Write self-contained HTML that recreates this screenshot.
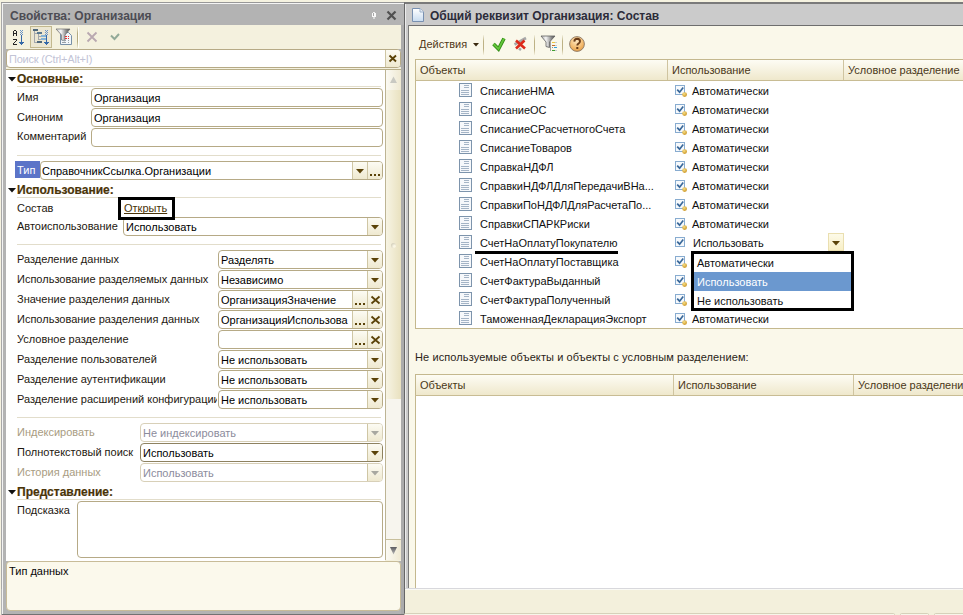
<!DOCTYPE html><html><head><meta charset="utf-8"><style>body{margin:0;width:963px;height:615px;overflow:hidden;position:relative;background:#f5f2e0;font-family:"Liberation Sans",sans-serif}</style></head><body>
<div style="position:absolute;left:1px;top:2px;width:403px;height:613px;background:#b3b3b3;border-top:1px solid #989898;box-sizing:border-box"></div>
<div style="position:absolute;left:1px;top:3px;width:1px;height:586px;background:#a8a8a8"></div>
<div style="position:absolute;left:2px;top:3px;width:402px;height:1px;background:#f4f4f4"></div>
<div style="position:absolute;left:2px;top:3px;width:1px;height:612px;background:#f2f2f2"></div>
<div style="position:absolute;left:2px;top:614px;width:402px;height:1px;background:#727272"></div>
<div style="position:absolute;left:10px;top:9.34px;line-height:15px;font-size:12px;font-weight:bold;color:#4c4c54;white-space:nowrap;">Свойства: Организация</div>
<svg style="position:absolute;left:372px;top:12px" width="4" height="7" shape-rendering="crispEdges"><rect x="0" y="1" width="4" height="4" fill="#fafafa"/><rect x="1" y="0" width="2" height="1" fill="#f0f0f0"/><rect x="1" y="1" width="1" height="3" fill="#a8a8a8"/><rect x="1" y="5" width="2" height="2" fill="#d8d8d8"/></svg>
<svg style="position:absolute;left:386px;top:10px" width="11" height="11"><path d="M1.5 1.5 L9.5 9.5 M9.5 1.5 L1.5 9.5" stroke="#505050" stroke-width="2.2"/></svg>
<div style="position:absolute;left:401px;top:25px;width:3px;height:589px;background:#ababab"></div>
<div style="position:absolute;left:6px;top:25px;width:395px;height:24px;background:#f4f1de"></div>
<div style="position:absolute;left:30px;top:26px;width:22px;height:22px;background:#ece7d2;border:1px solid #c2b88e;box-sizing:border-box"></div>
<svg style="position:absolute;left:0;top:0" width="80" height="50" shape-rendering="crispEdges"><rect x="14" y="30" width="2" height="1" fill="#262626"/><rect x="13" y="31" width="1" height="5" fill="#262626"/><rect x="16" y="31" width="1" height="5" fill="#262626"/><rect x="14" y="33" width="2" height="1" fill="#262626"/><rect x="13" y="39" width="4" height="1" fill="#262626"/><rect x="16" y="40" width="1" height="1" fill="#262626"/><rect x="15" y="41" width="1" height="1" fill="#262626"/><rect x="14" y="42" width="1" height="1" fill="#262626"/><rect x="13" y="43" width="1" height="1" fill="#262626"/><rect x="13" y="44" width="4" height="1" fill="#262626"/><rect x="20" y="30" width="1" height="1" fill="#6a94c8"/><rect x="22" y="30" width="1" height="1" fill="#6a94c8"/><rect x="21" y="31" width="1" height="1" fill="#6a94c8"/><rect x="20" y="32" width="1" height="1" fill="#6a94c8"/><rect x="22" y="32" width="1" height="1" fill="#6a94c8"/><rect x="21" y="33" width="1" height="1" fill="#6a94c8"/><rect x="20" y="34" width="1" height="1" fill="#6a94c8"/><rect x="22" y="34" width="1" height="1" fill="#6a94c8"/><rect x="21" y="35" width="1" height="7" fill="#3468a8"/><rect x="19" y="42" width="5" height="1" fill="#3468a8"/><rect x="20" y="43" width="3" height="1" fill="#3468a8"/><rect x="21" y="44" width="1" height="1" fill="#3468a8"/><rect x="33" y="29" width="5" height="2" fill="#4e687c"/><rect x="34" y="31" width="1" height="12" fill="#a4a8ac"/><rect x="35" y="33" width="2" height="1" fill="#a4a8ac"/><rect x="37" y="32" width="5" height="2" fill="#587890"/><rect x="38" y="34" width="1" height="6" fill="#a4a8ac"/><rect x="39" y="36" width="2" height="1" fill="#a4a8ac"/><rect x="39" y="39" width="2" height="1" fill="#a4a8ac"/><rect x="41" y="35" width="5" height="2" fill="#86b4d6"/><rect x="41" y="38" width="5" height="2" fill="#86b4d6"/><rect x="35" y="42" width="2" height="1" fill="#a4a8ac"/><rect x="37" y="41" width="5" height="2" fill="#4e687c"/><rect x="45" y="30" width="1" height="1" fill="#6a94c8"/><rect x="47" y="30" width="1" height="1" fill="#6a94c8"/><rect x="46" y="31" width="1" height="1" fill="#6a94c8"/><rect x="45" y="32" width="1" height="1" fill="#6a94c8"/><rect x="47" y="32" width="1" height="1" fill="#6a94c8"/><rect x="46" y="33" width="1" height="1" fill="#6a94c8"/><rect x="45" y="34" width="1" height="1" fill="#6a94c8"/><rect x="47" y="34" width="1" height="1" fill="#6a94c8"/><rect x="46" y="35" width="1" height="7" fill="#3468a8"/><rect x="44" y="42" width="5" height="1" fill="#3468a8"/><rect x="45" y="43" width="3" height="1" fill="#3468a8"/><rect x="46" y="44" width="1" height="1" fill="#3468a8"/><path d="M60.5 32.5 H68.5 L71.5 35.5 V44.5 H60.5 Z" fill="#f2f6fa" stroke="#7890a8" shape-rendering="auto"/><defs><linearGradient id="fg" x1="0" x2="1"><stop offset="0" stop-color="#c8c8c8"/><stop offset="0.35" stop-color="#f8f8f8"/><stop offset="0.7" stop-color="#909090"/><stop offset="1" stop-color="#505050"/></linearGradient></defs><path d="M56 29 H70 L65 35 V41 L61.5 40 V35 Z" fill="url(#fg)" stroke="#6a6a6a" stroke-width="0.7" shape-rendering="auto"/><rect x="65" y="36" width="2" height="1" fill="#e83030"/><rect x="68" y="36" width="1" height="1" fill="#e83030"/><rect x="65" y="38" width="2" height="1" fill="#e83030"/><rect x="68" y="38" width="1" height="1" fill="#e83030"/><rect x="62" y="40" width="4" height="1" fill="#98a0a8"/><rect x="68" y="40" width="1" height="1" fill="#98a0a8"/><rect x="62" y="42" width="4" height="1" fill="#98a0a8"/><rect x="68" y="42" width="1" height="1" fill="#98a0a8"/></svg>
<div style="position:absolute;left:77px;top:27px;width:1px;height:21px;background:linear-gradient(rgba(180,170,120,0.1),#b4aa80 30%,#b4aa80 70%,rgba(180,170,120,0.1));box-shadow:1px 0 0 #fffef8"></div>
<svg style="position:absolute;left:86px;top:31px" width="12" height="12"><path d="M1.5 1.5 L10.5 10.5 M10.5 1.5 L1.5 10.5" stroke="#b9a8b0" stroke-width="1.8"/></svg>
<svg style="position:absolute;left:110px;top:33px" width="10" height="8"><path d="M1 2.5 L4.5 6 L9 1" stroke="#92aa98" stroke-width="2" fill="none"/></svg>
<div style="position:absolute;left:6px;top:67px;width:395px;height:2px;background:#f4f1de"></div>
<div style="position:absolute;left:6px;top:69px;width:395px;height:1px;background:#b8ae88"></div>
<div style="position:absolute;left:6px;top:49px;width:395px;height:19px;background:#fff;border:1px solid #b6aa86;border-radius:4px;box-sizing:border-box"></div>
<div style="position:absolute;left:9px;top:52.19px;line-height:14px;font-size:11px;font-weight:normal;color:#c2c4d6;white-space:nowrap;letter-spacing:-0.2px">Поиск (Ctrl+Alt+I)</div>
<div style="position:absolute;left:385px;top:50px;width:15px;height:17px;background:linear-gradient(#fcfbf3,#efe9d0);border-left:1px solid #cfc6a4;border-radius:0 3px 3px 0;box-sizing:border-box"></div>
<svg style="position:absolute;left:388px;top:54px" width="10" height="9"><path d="M1.5 1.5 L8 7.5 M8 1.5 L1.5 7.5" stroke="#5a4208" stroke-width="1.9"/></svg>
<div style="position:absolute;left:6px;top:70px;width:379px;height:491px;background:#fff"></div>
<div style="position:absolute;left:385px;top:560px;width:16px;height:1px;background:#f4f1de"></div>
<div style="position:absolute;left:385px;top:70px;width:16px;height:490px;background:#f7f5ee;border-left:1px solid #bdb494;box-sizing:border-box"></div>
<div style="position:absolute;left:386px;top:70px;width:15px;height:21px;background:linear-gradient(90deg,#fbfaf4,#efe9d2);border-bottom:1px solid #b8ae88;box-sizing:border-box"></div>
<svg style="position:absolute;left:389px;top:76px" width="9" height="7"><path d="M1 7 L4.5 0.5 L8 7 Z" fill="#c9c9c2"/></svg>
<div style="position:absolute;left:386px;top:90px;width:15px;height:309px;background:linear-gradient(90deg,#f7f4e4,#e9e1bf)"></div>
<div style="position:absolute;left:391px;top:243px;width:5px;height:5px;border-radius:50%;background:radial-gradient(circle at 70% 70%,#faf6e4 20%,#c8c4b0 90%)"></div>
<div style="position:absolute;left:386px;top:539px;width:15px;height:21px;background:linear-gradient(90deg,#fbfaf4,#efe9d2);border-top:1px solid #c8bf9c;box-sizing:border-box"></div>
<svg style="position:absolute;left:389px;top:547px" width="9" height="8"><defs><linearGradient id="sdg" x1="0" y1="0" x2="0" y2="1"><stop offset="0" stop-color="#5c5c60"/><stop offset="1" stop-color="#b8b8b8"/></linearGradient></defs><path d="M1 0 H8 L4.5 7.5 Z" fill="url(#sdg)"/></svg>
<svg style="position:absolute;left:8px;top:77px" width="8" height="4.5"><path d="M0 0 H8 L4.0 4.5 Z" fill="#111"/></svg>
<div style="position:absolute;left:17px;top:72.34px;line-height:15px;font-size:12px;font-weight:bold;color:#4a3408;white-space:nowrap;-webkit-text-stroke:0.2px #4a3408">Основные:</div>
<div style="position:absolute;left:17px;top:86px;width:364px;height:1px;background:#e2ddcb"></div>
<div style="position:absolute;left:17px;top:90.19px;line-height:14px;font-size:11px;font-weight:normal;color:#1e1810;white-space:nowrap;">Имя</div>
<div style="position:absolute;left:91px;top:88px;width:292px;height:19px;background:#fff;border:1px solid #b6aa86;border-radius:4px;box-sizing:border-box"></div>
<div style="position:absolute;left:94px;top:91.19px;line-height:14px;font-size:11px;font-weight:normal;color:#000;white-space:nowrap;overflow:hidden;width:287px">Организация</div>
<div style="position:absolute;left:17px;top:110.19px;line-height:14px;font-size:11px;font-weight:normal;color:#1e1810;white-space:nowrap;">Синоним</div>
<div style="position:absolute;left:91px;top:108px;width:292px;height:19px;background:#fff;border:1px solid #b6aa86;border-radius:4px;box-sizing:border-box"></div>
<div style="position:absolute;left:94px;top:111.19px;line-height:14px;font-size:11px;font-weight:normal;color:#000;white-space:nowrap;overflow:hidden;width:287px">Организация</div>
<div style="position:absolute;left:17px;top:129.19px;line-height:14px;font-size:11px;font-weight:normal;color:#1e1810;white-space:nowrap;">Комментарий</div>
<div style="position:absolute;left:91px;top:128px;width:292px;height:19px;background:#fff;border:1px solid #b6aa86;border-radius:4px;box-sizing:border-box"></div>
<div style="position:absolute;left:17px;top:155px;width:364px;height:1px;background:#e2ddcb"></div>
<div style="position:absolute;left:15px;top:161px;width:25px;height:17px;background:#5b74c8"></div>
<div style="position:absolute;left:17px;top:163.19px;line-height:14px;font-size:11px;font-weight:normal;color:#fff;white-space:nowrap;">Тип</div>
<div style="position:absolute;left:40px;top:161px;width:343px;height:19px;background:#fff;border:1px solid #b6aa86;border-radius:4px;box-sizing:border-box"></div>
<div style="position:absolute;left:367px;top:162px;width:15px;height:17px;background:linear-gradient(#fcfbf3,#efe9d0);border-left:1px solid #cfc6a4;box-sizing:border-box;border-radius:0 3px 3px 0;"></div>
<div style="position:absolute;left:370px;top:174px;width:2px;height:2px;background:#5a4208"></div>
<div style="position:absolute;left:374px;top:174px;width:2px;height:2px;background:#5a4208"></div>
<div style="position:absolute;left:378px;top:174px;width:2px;height:2px;background:#5a4208"></div>
<div style="position:absolute;left:352px;top:162px;width:15px;height:17px;background:linear-gradient(#fcfbf3,#efe9d0);border-left:1px solid #cfc6a4;box-sizing:border-box;"></div>
<svg style="position:absolute;left:356px;top:169px" width="8" height="4.5"><path d="M0 0 H8 L4.0 4.5 Z" fill="#5a4208"/></svg>
<div style="position:absolute;left:42px;top:164.19px;line-height:14px;font-size:11px;font-weight:normal;color:#000;white-space:nowrap;overflow:hidden;width:309px">СправочникСсылка.Организации</div>
<svg style="position:absolute;left:8px;top:188px" width="8" height="4.5"><path d="M0 0 H8 L4.0 4.5 Z" fill="#111"/></svg>
<div style="position:absolute;left:17px;top:183.34px;line-height:15px;font-size:12px;font-weight:bold;color:#4a3408;white-space:nowrap;-webkit-text-stroke:0.2px #4a3408">Использование:</div>
<div style="position:absolute;left:17px;top:197px;width:364px;height:1px;background:#e2ddcb"></div>
<div style="position:absolute;left:17px;top:201.19px;line-height:14px;font-size:11px;font-weight:normal;color:#1e1810;white-space:nowrap;">Состав</div>
<div style="position:absolute;left:123px;top:217px;width:260px;height:19px;background:#fff;border:1px solid #b6aa86;border-radius:4px;box-sizing:border-box"></div>
<div style="position:absolute;left:367px;top:218px;width:15px;height:17px;background:linear-gradient(#fcfbf3,#efe9d0);border-left:1px solid #cfc6a4;box-sizing:border-box;border-radius:0 3px 3px 0;"></div>
<svg style="position:absolute;left:371px;top:225px" width="8" height="4.5"><path d="M0 0 H8 L4.0 4.5 Z" fill="#5a4208"/></svg>
<div style="position:absolute;left:126px;top:220.19px;line-height:14px;font-size:11px;font-weight:normal;color:#000;white-space:nowrap;overflow:hidden;width:240px">Использовать</div>
<div style="position:absolute;left:124px;top:201.19px;line-height:14px;font-size:11px;font-weight:normal;color:#4a3408;white-space:nowrap;text-decoration:underline;text-decoration-skip-ink:none">Открыть</div>
<div style="position:absolute;left:118px;top:197px;width:57px;height:23px;border:3px solid #000;box-sizing:border-box"></div>
<div style="position:absolute;left:17px;top:219.19px;line-height:14px;font-size:11px;font-weight:normal;color:#1e1810;white-space:nowrap;">Автоиспользование</div>
<div style="position:absolute;left:17px;top:244px;width:364px;height:1px;background:#e2ddcb"></div>
<div style="position:absolute;left:17px;top:252.19px;line-height:14px;font-size:11px;font-weight:normal;color:#1e1810;white-space:nowrap;width:200px;overflow:hidden">Разделение данных</div>
<div style="position:absolute;left:218px;top:250px;width:165px;height:19px;background:#fff;border:1px solid #b6aa86;border-radius:4px;box-sizing:border-box"></div>
<div style="position:absolute;left:367px;top:251px;width:15px;height:17px;background:linear-gradient(#fcfbf3,#efe9d0);border-left:1px solid #cfc6a4;box-sizing:border-box;border-radius:0 3px 3px 0;"></div>
<svg style="position:absolute;left:371px;top:258px" width="8" height="4.5"><path d="M0 0 H8 L4.0 4.5 Z" fill="#5a4208"/></svg>
<div style="position:absolute;left:221px;top:253.19px;line-height:14px;font-size:11px;font-weight:normal;color:#000;white-space:nowrap;overflow:hidden;width:145px">Разделять</div>
<div style="position:absolute;left:17px;top:272.19px;line-height:14px;font-size:11px;font-weight:normal;color:#1e1810;white-space:nowrap;width:200px;overflow:hidden">Использование разделяемых данных</div>
<div style="position:absolute;left:218px;top:270px;width:165px;height:19px;background:#fff;border:1px solid #b6aa86;border-radius:4px;box-sizing:border-box"></div>
<div style="position:absolute;left:367px;top:271px;width:15px;height:17px;background:linear-gradient(#fcfbf3,#efe9d0);border-left:1px solid #cfc6a4;box-sizing:border-box;border-radius:0 3px 3px 0;"></div>
<svg style="position:absolute;left:371px;top:278px" width="8" height="4.5"><path d="M0 0 H8 L4.0 4.5 Z" fill="#5a4208"/></svg>
<div style="position:absolute;left:221px;top:273.19px;line-height:14px;font-size:11px;font-weight:normal;color:#000;white-space:nowrap;overflow:hidden;width:145px">Независимо</div>
<div style="position:absolute;left:17px;top:292.19px;line-height:14px;font-size:11px;font-weight:normal;color:#1e1810;white-space:nowrap;width:200px;overflow:hidden">Значение разделения данных</div>
<div style="position:absolute;left:218px;top:290px;width:165px;height:19px;background:#fff;border:1px solid #b6aa86;border-radius:4px;box-sizing:border-box"></div>
<div style="position:absolute;left:367px;top:291px;width:15px;height:17px;background:linear-gradient(#fcfbf3,#efe9d0);border-left:1px solid #cfc6a4;box-sizing:border-box;border-radius:0 3px 3px 0;"></div>
<svg style="position:absolute;left:367px;top:290px" width="15" height="19"><path d="M4.5 6.5 L12.5 13.5 M12.5 6.5 L4.5 13.5" stroke="#5a4208" stroke-width="1.8"/></svg>
<div style="position:absolute;left:352px;top:291px;width:15px;height:17px;background:linear-gradient(#fcfbf3,#efe9d0);border-left:1px solid #cfc6a4;box-sizing:border-box;"></div>
<div style="position:absolute;left:355px;top:303px;width:2px;height:2px;background:#5a4208"></div>
<div style="position:absolute;left:359px;top:303px;width:2px;height:2px;background:#5a4208"></div>
<div style="position:absolute;left:363px;top:303px;width:2px;height:2px;background:#5a4208"></div>
<div style="position:absolute;left:221px;top:293.19px;line-height:14px;font-size:11px;font-weight:normal;color:#000;white-space:nowrap;overflow:hidden;width:130px">ОрганизацияЗначение</div>
<div style="position:absolute;left:17px;top:312.19px;line-height:14px;font-size:11px;font-weight:normal;color:#1e1810;white-space:nowrap;width:200px;overflow:hidden">Использование разделения данных</div>
<div style="position:absolute;left:218px;top:310px;width:165px;height:19px;background:#fff;border:1px solid #b6aa86;border-radius:4px;box-sizing:border-box"></div>
<div style="position:absolute;left:367px;top:311px;width:15px;height:17px;background:linear-gradient(#fcfbf3,#efe9d0);border-left:1px solid #cfc6a4;box-sizing:border-box;border-radius:0 3px 3px 0;"></div>
<svg style="position:absolute;left:367px;top:310px" width="15" height="19"><path d="M4.5 6.5 L12.5 13.5 M12.5 6.5 L4.5 13.5" stroke="#5a4208" stroke-width="1.8"/></svg>
<div style="position:absolute;left:352px;top:311px;width:15px;height:17px;background:linear-gradient(#fcfbf3,#efe9d0);border-left:1px solid #cfc6a4;box-sizing:border-box;"></div>
<div style="position:absolute;left:355px;top:323px;width:2px;height:2px;background:#5a4208"></div>
<div style="position:absolute;left:359px;top:323px;width:2px;height:2px;background:#5a4208"></div>
<div style="position:absolute;left:363px;top:323px;width:2px;height:2px;background:#5a4208"></div>
<div style="position:absolute;left:221px;top:313.19px;line-height:14px;font-size:11px;font-weight:normal;color:#000;white-space:nowrap;overflow:hidden;width:130px">ОрганизацияИспользова</div>
<div style="position:absolute;left:17px;top:332.19px;line-height:14px;font-size:11px;font-weight:normal;color:#1e1810;white-space:nowrap;width:200px;overflow:hidden">Условное разделение</div>
<div style="position:absolute;left:218px;top:330px;width:165px;height:19px;background:#fff;border:1px solid #b6aa86;border-radius:4px;box-sizing:border-box"></div>
<div style="position:absolute;left:367px;top:331px;width:15px;height:17px;background:linear-gradient(#fcfbf3,#efe9d0);border-left:1px solid #cfc6a4;box-sizing:border-box;border-radius:0 3px 3px 0;"></div>
<svg style="position:absolute;left:367px;top:330px" width="15" height="19"><path d="M4.5 6.5 L12.5 13.5 M12.5 6.5 L4.5 13.5" stroke="#5a4208" stroke-width="1.8"/></svg>
<div style="position:absolute;left:352px;top:331px;width:15px;height:17px;background:linear-gradient(#fcfbf3,#efe9d0);border-left:1px solid #cfc6a4;box-sizing:border-box;"></div>
<div style="position:absolute;left:355px;top:343px;width:2px;height:2px;background:#5a4208"></div>
<div style="position:absolute;left:359px;top:343px;width:2px;height:2px;background:#5a4208"></div>
<div style="position:absolute;left:363px;top:343px;width:2px;height:2px;background:#5a4208"></div>
<div style="position:absolute;left:17px;top:352.19px;line-height:14px;font-size:11px;font-weight:normal;color:#1e1810;white-space:nowrap;width:200px;overflow:hidden">Разделение пользователей</div>
<div style="position:absolute;left:218px;top:350px;width:165px;height:19px;background:#fff;border:1px solid #b6aa86;border-radius:4px;box-sizing:border-box"></div>
<div style="position:absolute;left:367px;top:351px;width:15px;height:17px;background:linear-gradient(#fcfbf3,#efe9d0);border-left:1px solid #cfc6a4;box-sizing:border-box;border-radius:0 3px 3px 0;"></div>
<svg style="position:absolute;left:371px;top:358px" width="8" height="4.5"><path d="M0 0 H8 L4.0 4.5 Z" fill="#5a4208"/></svg>
<div style="position:absolute;left:221px;top:353.19px;line-height:14px;font-size:11px;font-weight:normal;color:#000;white-space:nowrap;overflow:hidden;width:145px">Не использовать</div>
<div style="position:absolute;left:17px;top:372.19px;line-height:14px;font-size:11px;font-weight:normal;color:#1e1810;white-space:nowrap;width:200px;overflow:hidden">Разделение аутентификации</div>
<div style="position:absolute;left:218px;top:370px;width:165px;height:19px;background:#fff;border:1px solid #b6aa86;border-radius:4px;box-sizing:border-box"></div>
<div style="position:absolute;left:367px;top:371px;width:15px;height:17px;background:linear-gradient(#fcfbf3,#efe9d0);border-left:1px solid #cfc6a4;box-sizing:border-box;border-radius:0 3px 3px 0;"></div>
<svg style="position:absolute;left:371px;top:378px" width="8" height="4.5"><path d="M0 0 H8 L4.0 4.5 Z" fill="#5a4208"/></svg>
<div style="position:absolute;left:221px;top:373.19px;line-height:14px;font-size:11px;font-weight:normal;color:#000;white-space:nowrap;overflow:hidden;width:145px">Не использовать</div>
<div style="position:absolute;left:17px;top:392.19px;line-height:14px;font-size:11px;font-weight:normal;color:#1e1810;white-space:nowrap;width:200px;overflow:hidden">Разделение расширений конфигурации</div>
<div style="position:absolute;left:218px;top:390px;width:165px;height:19px;background:#fff;border:1px solid #b6aa86;border-radius:4px;box-sizing:border-box"></div>
<div style="position:absolute;left:367px;top:391px;width:15px;height:17px;background:linear-gradient(#fcfbf3,#efe9d0);border-left:1px solid #cfc6a4;box-sizing:border-box;border-radius:0 3px 3px 0;"></div>
<svg style="position:absolute;left:371px;top:398px" width="8" height="4.5"><path d="M0 0 H8 L4.0 4.5 Z" fill="#5a4208"/></svg>
<div style="position:absolute;left:221px;top:393.19px;line-height:14px;font-size:11px;font-weight:normal;color:#000;white-space:nowrap;overflow:hidden;width:145px">Не использовать</div>
<div style="position:absolute;left:17px;top:417px;width:364px;height:1px;background:#e2ddcb"></div>
<div style="position:absolute;left:17px;top:425.19px;line-height:14px;font-size:11px;font-weight:normal;color:#a89c82;white-space:nowrap;">Индексировать</div>
<div style="position:absolute;left:140px;top:423px;width:243px;height:19px;background:#fff;border:1px solid #d8d0b8;border-radius:4px;box-sizing:border-box"></div>
<div style="position:absolute;left:367px;top:424px;width:15px;height:17px;background:linear-gradient(#fcfbf3,#efe9d0);border-left:1px solid #cfc6a4;box-sizing:border-box;border-radius:0 3px 3px 0;"></div>
<svg style="position:absolute;left:371px;top:431px" width="8" height="4.5"><path d="M0 0 H8 L4.0 4.5 Z" fill="#a8a8a0"/></svg>
<div style="position:absolute;left:143px;top:426.19px;line-height:14px;font-size:11px;font-weight:normal;color:#8c8c9c;white-space:nowrap;overflow:hidden;width:223px">Не индексировать</div>
<div style="position:absolute;left:17px;top:445.19px;line-height:14px;font-size:11px;font-weight:normal;color:#1e1810;white-space:nowrap;">Полнотекстовый поиск</div>
<div style="position:absolute;left:140px;top:443px;width:243px;height:19px;background:#fff;border:1px solid #8e8260;border-radius:4px;box-sizing:border-box"></div>
<div style="position:absolute;left:367px;top:444px;width:15px;height:17px;background:linear-gradient(#fcfbf3,#efe9d0);border-left:1px solid #cfc6a4;box-sizing:border-box;border-radius:0 3px 3px 0;"></div>
<svg style="position:absolute;left:371px;top:451px" width="8" height="4.5"><path d="M0 0 H8 L4.0 4.5 Z" fill="#5a4208"/></svg>
<div style="position:absolute;left:143px;top:446.19px;line-height:14px;font-size:11px;font-weight:normal;color:#000;white-space:nowrap;overflow:hidden;width:223px">Использовать</div>
<div style="position:absolute;left:17px;top:465.19px;line-height:14px;font-size:11px;font-weight:normal;color:#a89c82;white-space:nowrap;">История данных</div>
<div style="position:absolute;left:140px;top:463px;width:243px;height:19px;background:#fff;border:1px solid #d8d0b8;border-radius:4px;box-sizing:border-box"></div>
<div style="position:absolute;left:367px;top:464px;width:15px;height:17px;background:linear-gradient(#fcfbf3,#efe9d0);border-left:1px solid #cfc6a4;box-sizing:border-box;border-radius:0 3px 3px 0;"></div>
<svg style="position:absolute;left:371px;top:471px" width="8" height="4.5"><path d="M0 0 H8 L4.0 4.5 Z" fill="#a8a8a0"/></svg>
<div style="position:absolute;left:143px;top:466.19px;line-height:14px;font-size:11px;font-weight:normal;color:#8c8c9c;white-space:nowrap;overflow:hidden;width:223px">Использовать</div>
<svg style="position:absolute;left:8px;top:490px" width="8" height="4.5"><path d="M0 0 H8 L4.0 4.5 Z" fill="#111"/></svg>
<div style="position:absolute;left:17px;top:485.34px;line-height:15px;font-size:12px;font-weight:bold;color:#4a3408;white-space:nowrap;-webkit-text-stroke:0.2px #4a3408">Представление:</div>
<div style="position:absolute;left:17px;top:499px;width:364px;height:1px;background:#e2ddcb"></div>
<div style="position:absolute;left:17px;top:503.19px;line-height:14px;font-size:11px;font-weight:normal;color:#1e1810;white-space:nowrap;">Подсказка</div>
<div style="position:absolute;left:77px;top:501px;width:306px;height:57px;background:#fff;border:1px solid #b6aa86;border-radius:4px;box-sizing:border-box"></div>
<div style="position:absolute;left:6px;top:561px;width:395px;height:50px;background:#fbf9ec;border:1px solid #c8bc98;border-radius:4px;box-sizing:border-box"></div>
<div style="position:absolute;left:9px;top:564.19px;line-height:14px;font-size:11px;font-weight:normal;color:#080808;white-space:nowrap;">Тип данных</div>
<div style="position:absolute;left:404px;top:2px;width:559px;height:613px;background:#cbcbcb;border-top:2px solid #7a7a7a;border-left:1px solid #666;box-sizing:border-box"></div>
<div style="position:absolute;left:405px;top:4px;width:1px;height:611px;background:#ececec"></div>
<div style="position:absolute;left:408px;top:25px;width:555px;height:1px;background:#6e6e6e"></div>
<div style="position:absolute;left:408px;top:25px;width:1px;height:563px;background:#7a7a7a"></div>
<div style="position:absolute;left:409px;top:26px;width:554px;height:562px;background:#faf8ea"></div>
<svg style="position:absolute;left:411px;top:7px" width="14" height="16"><defs><linearGradient id="dg" x1="0" y1="0" x2="0" y2="1"><stop offset="0" stop-color="#ffffff"/><stop offset="1" stop-color="#c8dcf0"/></linearGradient></defs><path d="M1.5 1.5 H9 L12.5 5 V14.5 H1.5 Z" fill="url(#dg)" stroke="#7890b0"/><path d="M9 1.5 V5 H12.5" fill="#e8eef8" stroke="#9ab0c8"/></svg>
<div style="position:absolute;left:430px;top:9.34px;line-height:15px;font-size:12px;font-weight:bold;color:#2c2c3a;white-space:nowrap;">Общий реквизит Организация: Состав</div>
<div style="position:absolute;left:419px;top:37.19px;line-height:14px;font-size:11px;font-weight:normal;color:#503818;white-space:nowrap;">Действия</div>
<svg style="position:absolute;left:473px;top:43px" width="6" height="3.5"><path d="M0 0 H6 L3.0 3.5 Z" fill="#3a2a10"/></svg>
<div style="position:absolute;left:483px;top:35px;width:1px;height:20px;background:linear-gradient(rgba(190,178,130,0.1),#bdb285 30%,#bdb285 70%,rgba(190,178,130,0.1))"></div>
<div style="position:absolute;left:534px;top:35px;width:1px;height:20px;background:linear-gradient(rgba(190,178,130,0.1),#bdb285 30%,#bdb285 70%,rgba(190,178,130,0.1))"></div>
<div style="position:absolute;left:562px;top:35px;width:1px;height:20px;background:linear-gradient(rgba(190,178,130,0.1),#bdb285 30%,#bdb285 70%,rgba(190,178,130,0.1))"></div>
<svg style="position:absolute;left:480px;top:30px" width="110" height="28"><path d="M13.5 14 L18.5 19 L24 8.5" stroke="#2e8a12" stroke-width="3.6" fill="none" stroke-linejoin="miter" stroke-miterlimit="3"/><path d="M13.5 14 L18.5 19 L24 8.5" stroke="#62c43a" stroke-width="1.8" fill="none" stroke-linejoin="miter" stroke-miterlimit="3"/><path d="M34.5 14.5 L46 8" stroke="#a8a8a8" stroke-width="2.6"/><path d="M39 18.5 L41 20" stroke="#a8a8a8" stroke-width="2.4"/><path d="M36 10.5 L45 18.5 M44.5 10.5 L36 18.5" stroke="#dc2a1a" stroke-width="2.6"/><defs><linearGradient id="fg2" x1="0" x2="1"><stop offset="0" stop-color="#b0b0b0"/><stop offset="0.35" stop-color="#f4f4f4"/><stop offset="0.75" stop-color="#888"/><stop offset="1" stop-color="#555"/></linearGradient><radialGradient id="hg" cx="0.45" cy="0.3" r="0.75"><stop offset="0" stop-color="#fde6c0"/><stop offset="0.6" stop-color="#f4bc70"/><stop offset="1" stop-color="#e49a40"/></radialGradient></defs><path d="M61 6 H75 L69.5 12 V17.5 L66 16.5 V12 Z" fill="url(#fg2)" stroke="#606060" stroke-width="0.8"/><g shape-rendering="crispEdges"><rect x="70" y="11" width="1" height="10" fill="#a0a0a0"/><rect x="72" y="12" width="3" height="1" fill="#f0c840"/><rect x="75" y="12" width="2" height="1" fill="#c8ccd0"/><rect x="72" y="15" width="3" height="1" fill="#c06828"/><rect x="75" y="15" width="2" height="1" fill="#c8ccd0"/><rect x="74" y="17" width="3" height="1" fill="#30a0e0"/><rect x="72" y="17" width="1" height="1" fill="#909090"/><rect x="72" y="20" width="3" height="1" fill="#40a030"/><rect x="75" y="20" width="2" height="1" fill="#c8ccd0"/></g><circle cx="97" cy="14" r="7.4" fill="url(#hg)" stroke="#8a7868" stroke-width="0.9"/><path d="M94.3 11.6 Q94.5 8.8 97.2 8.8 Q100 8.9 100 11.3 Q100 13 98.2 13.8 Q97.3 14.3 97.3 15.6" stroke="#6a3c18" stroke-width="1.9" fill="none"/><rect x="96.3" y="17" width="2" height="2" fill="#6a3c18"/></svg>
<div style="position:absolute;left:415px;top:59px;width:548px;height:270px;background:#fff;border:1px solid #c4b88e;border-right:none;box-sizing:border-box"></div>
<div style="position:absolute;left:415px;top:59px;width:548px;height:22px;background:linear-gradient(#fdfcf4,#efe8cc);border-top:1px solid #c4b88e;border-bottom:1px solid #c8bc94;border-left:1px solid #c4b88e;box-sizing:border-box"></div>
<div style="position:absolute;left:667px;top:60px;width:1px;height:20px;background:#cfc4a0"></div>
<div style="position:absolute;left:843px;top:60px;width:1px;height:20px;background:#cfc4a0"></div>
<div style="position:absolute;left:420px;top:63.19px;line-height:14px;font-size:11px;font-weight:normal;color:#4a3818;white-space:nowrap;">Объекты</div>
<div style="position:absolute;left:672px;top:63.19px;line-height:14px;font-size:11px;font-weight:normal;color:#4a3818;white-space:nowrap;">Использование</div>
<div style="position:absolute;left:848px;top:63.19px;line-height:14px;font-size:11px;font-weight:normal;color:#4a3818;white-space:nowrap;">Условное разделение</div>
<svg style="position:absolute;left:459px;top:83px" width="13" height="15"><rect x="0.5" y="0.5" width="12" height="13" fill="#f6f8fb" stroke="#7d94ac"/><path d="M5 2.5 H10 M5 4.5 H10 M2 7.5 H10 M2 9.5 H10 M2 11.5 H10" stroke="#a4b4c6" stroke-width="1"/></svg>
<div style="position:absolute;left:480px;top:84.19px;line-height:14px;font-size:11px;font-weight:normal;color:#101010;white-space:nowrap;">СписаниеНМА</div>
<svg style="position:absolute;left:675px;top:85px" width="13" height="13"><defs><radialGradient id="gd67585" cx="0.4" cy="0.35" r="0.7"><stop offset="0" stop-color="#f8e088"/><stop offset="1" stop-color="#c8901c"/></radialGradient></defs><rect x="0.5" y="0.5" width="9" height="9" fill="#f6f9fc" stroke="#88acd0"/><path d="M2.2 4.6 L4.6 7.2 L8.2 2.6" stroke="#3a689a" stroke-width="1.7" fill="none"/><circle cx="9.6" cy="9.6" r="2.4" fill="url(#gd67585)"/></svg>
<div style="position:absolute;left:692px;top:84.19px;line-height:14px;font-size:11px;font-weight:normal;color:#101010;white-space:nowrap;">Автоматически</div>
<svg style="position:absolute;left:459px;top:102px" width="13" height="15"><rect x="0.5" y="0.5" width="12" height="13" fill="#f6f8fb" stroke="#7d94ac"/><path d="M5 2.5 H10 M5 4.5 H10 M2 7.5 H10 M2 9.5 H10 M2 11.5 H10" stroke="#a4b4c6" stroke-width="1"/></svg>
<div style="position:absolute;left:480px;top:103.19px;line-height:14px;font-size:11px;font-weight:normal;color:#101010;white-space:nowrap;">СписаниеОС</div>
<svg style="position:absolute;left:675px;top:104px" width="13" height="13"><defs><radialGradient id="gd675104" cx="0.4" cy="0.35" r="0.7"><stop offset="0" stop-color="#f8e088"/><stop offset="1" stop-color="#c8901c"/></radialGradient></defs><rect x="0.5" y="0.5" width="9" height="9" fill="#f6f9fc" stroke="#88acd0"/><path d="M2.2 4.6 L4.6 7.2 L8.2 2.6" stroke="#3a689a" stroke-width="1.7" fill="none"/><circle cx="9.6" cy="9.6" r="2.4" fill="url(#gd675104)"/></svg>
<div style="position:absolute;left:692px;top:103.19px;line-height:14px;font-size:11px;font-weight:normal;color:#101010;white-space:nowrap;">Автоматически</div>
<svg style="position:absolute;left:459px;top:121px" width="13" height="15"><rect x="0.5" y="0.5" width="12" height="13" fill="#f6f8fb" stroke="#7d94ac"/><path d="M5 2.5 H10 M5 4.5 H10 M2 7.5 H10 M2 9.5 H10 M2 11.5 H10" stroke="#a4b4c6" stroke-width="1"/></svg>
<div style="position:absolute;left:480px;top:122.19px;line-height:14px;font-size:11px;font-weight:normal;color:#101010;white-space:nowrap;">СписаниеСРасчетногоСчета</div>
<svg style="position:absolute;left:675px;top:123px" width="13" height="13"><defs><radialGradient id="gd675123" cx="0.4" cy="0.35" r="0.7"><stop offset="0" stop-color="#f8e088"/><stop offset="1" stop-color="#c8901c"/></radialGradient></defs><rect x="0.5" y="0.5" width="9" height="9" fill="#f6f9fc" stroke="#88acd0"/><path d="M2.2 4.6 L4.6 7.2 L8.2 2.6" stroke="#3a689a" stroke-width="1.7" fill="none"/><circle cx="9.6" cy="9.6" r="2.4" fill="url(#gd675123)"/></svg>
<div style="position:absolute;left:692px;top:122.19px;line-height:14px;font-size:11px;font-weight:normal;color:#101010;white-space:nowrap;">Автоматически</div>
<svg style="position:absolute;left:459px;top:140px" width="13" height="15"><rect x="0.5" y="0.5" width="12" height="13" fill="#f6f8fb" stroke="#7d94ac"/><path d="M5 2.5 H10 M5 4.5 H10 M2 7.5 H10 M2 9.5 H10 M2 11.5 H10" stroke="#a4b4c6" stroke-width="1"/></svg>
<div style="position:absolute;left:480px;top:141.19px;line-height:14px;font-size:11px;font-weight:normal;color:#101010;white-space:nowrap;">СписаниеТоваров</div>
<svg style="position:absolute;left:675px;top:142px" width="13" height="13"><defs><radialGradient id="gd675142" cx="0.4" cy="0.35" r="0.7"><stop offset="0" stop-color="#f8e088"/><stop offset="1" stop-color="#c8901c"/></radialGradient></defs><rect x="0.5" y="0.5" width="9" height="9" fill="#f6f9fc" stroke="#88acd0"/><path d="M2.2 4.6 L4.6 7.2 L8.2 2.6" stroke="#3a689a" stroke-width="1.7" fill="none"/><circle cx="9.6" cy="9.6" r="2.4" fill="url(#gd675142)"/></svg>
<div style="position:absolute;left:692px;top:141.19px;line-height:14px;font-size:11px;font-weight:normal;color:#101010;white-space:nowrap;">Автоматически</div>
<svg style="position:absolute;left:459px;top:159px" width="13" height="15"><rect x="0.5" y="0.5" width="12" height="13" fill="#f6f8fb" stroke="#7d94ac"/><path d="M5 2.5 H10 M5 4.5 H10 M2 7.5 H10 M2 9.5 H10 M2 11.5 H10" stroke="#a4b4c6" stroke-width="1"/></svg>
<div style="position:absolute;left:480px;top:160.19px;line-height:14px;font-size:11px;font-weight:normal;color:#101010;white-space:nowrap;">СправкаНДФЛ</div>
<svg style="position:absolute;left:675px;top:161px" width="13" height="13"><defs><radialGradient id="gd675161" cx="0.4" cy="0.35" r="0.7"><stop offset="0" stop-color="#f8e088"/><stop offset="1" stop-color="#c8901c"/></radialGradient></defs><rect x="0.5" y="0.5" width="9" height="9" fill="#f6f9fc" stroke="#88acd0"/><path d="M2.2 4.6 L4.6 7.2 L8.2 2.6" stroke="#3a689a" stroke-width="1.7" fill="none"/><circle cx="9.6" cy="9.6" r="2.4" fill="url(#gd675161)"/></svg>
<div style="position:absolute;left:692px;top:160.19px;line-height:14px;font-size:11px;font-weight:normal;color:#101010;white-space:nowrap;">Автоматически</div>
<svg style="position:absolute;left:459px;top:178px" width="13" height="15"><rect x="0.5" y="0.5" width="12" height="13" fill="#f6f8fb" stroke="#7d94ac"/><path d="M5 2.5 H10 M5 4.5 H10 M2 7.5 H10 M2 9.5 H10 M2 11.5 H10" stroke="#a4b4c6" stroke-width="1"/></svg>
<div style="position:absolute;left:480px;top:179.19px;line-height:14px;font-size:11px;font-weight:normal;color:#101010;white-space:nowrap;">СправкиНДФЛДляПередачиВНа...</div>
<svg style="position:absolute;left:675px;top:180px" width="13" height="13"><defs><radialGradient id="gd675180" cx="0.4" cy="0.35" r="0.7"><stop offset="0" stop-color="#f8e088"/><stop offset="1" stop-color="#c8901c"/></radialGradient></defs><rect x="0.5" y="0.5" width="9" height="9" fill="#f6f9fc" stroke="#88acd0"/><path d="M2.2 4.6 L4.6 7.2 L8.2 2.6" stroke="#3a689a" stroke-width="1.7" fill="none"/><circle cx="9.6" cy="9.6" r="2.4" fill="url(#gd675180)"/></svg>
<div style="position:absolute;left:692px;top:179.19px;line-height:14px;font-size:11px;font-weight:normal;color:#101010;white-space:nowrap;">Автоматически</div>
<svg style="position:absolute;left:459px;top:197px" width="13" height="15"><rect x="0.5" y="0.5" width="12" height="13" fill="#f6f8fb" stroke="#7d94ac"/><path d="M5 2.5 H10 M5 4.5 H10 M2 7.5 H10 M2 9.5 H10 M2 11.5 H10" stroke="#a4b4c6" stroke-width="1"/></svg>
<div style="position:absolute;left:480px;top:198.19px;line-height:14px;font-size:11px;font-weight:normal;color:#101010;white-space:nowrap;">СправкиПоНДФЛДляРасчетаПо...</div>
<svg style="position:absolute;left:675px;top:199px" width="13" height="13"><defs><radialGradient id="gd675199" cx="0.4" cy="0.35" r="0.7"><stop offset="0" stop-color="#f8e088"/><stop offset="1" stop-color="#c8901c"/></radialGradient></defs><rect x="0.5" y="0.5" width="9" height="9" fill="#f6f9fc" stroke="#88acd0"/><path d="M2.2 4.6 L4.6 7.2 L8.2 2.6" stroke="#3a689a" stroke-width="1.7" fill="none"/><circle cx="9.6" cy="9.6" r="2.4" fill="url(#gd675199)"/></svg>
<div style="position:absolute;left:692px;top:198.19px;line-height:14px;font-size:11px;font-weight:normal;color:#101010;white-space:nowrap;">Автоматически</div>
<svg style="position:absolute;left:459px;top:216px" width="13" height="15"><rect x="0.5" y="0.5" width="12" height="13" fill="#f6f8fb" stroke="#7d94ac"/><path d="M5 2.5 H10 M5 4.5 H10 M2 7.5 H10 M2 9.5 H10 M2 11.5 H10" stroke="#a4b4c6" stroke-width="1"/></svg>
<div style="position:absolute;left:480px;top:217.19px;line-height:14px;font-size:11px;font-weight:normal;color:#101010;white-space:nowrap;">СправкиСПАРКРиски</div>
<svg style="position:absolute;left:675px;top:218px" width="13" height="13"><defs><radialGradient id="gd675218" cx="0.4" cy="0.35" r="0.7"><stop offset="0" stop-color="#f8e088"/><stop offset="1" stop-color="#c8901c"/></radialGradient></defs><rect x="0.5" y="0.5" width="9" height="9" fill="#f6f9fc" stroke="#88acd0"/><path d="M2.2 4.6 L4.6 7.2 L8.2 2.6" stroke="#3a689a" stroke-width="1.7" fill="none"/><circle cx="9.6" cy="9.6" r="2.4" fill="url(#gd675218)"/></svg>
<div style="position:absolute;left:692px;top:217.19px;line-height:14px;font-size:11px;font-weight:normal;color:#101010;white-space:nowrap;">Автоматически</div>
<svg style="position:absolute;left:459px;top:235px" width="13" height="15"><rect x="0.5" y="0.5" width="12" height="13" fill="#f6f8fb" stroke="#7d94ac"/><path d="M5 2.5 H10 M5 4.5 H10 M2 7.5 H10 M2 9.5 H10 M2 11.5 H10" stroke="#a4b4c6" stroke-width="1"/></svg>
<div style="position:absolute;left:480px;top:236.19px;line-height:14px;font-size:11px;font-weight:normal;color:#101010;white-space:nowrap;">СчетНаОплатуПокупателю</div>
<svg style="position:absolute;left:675px;top:237px" width="13" height="13"><defs><radialGradient id="gd675237" cx="0.4" cy="0.35" r="0.7"><stop offset="0" stop-color="#f8e088"/><stop offset="1" stop-color="#c8901c"/></radialGradient></defs><rect x="0.5" y="0.5" width="9" height="9" fill="#f6f9fc" stroke="#88acd0"/><path d="M2.2 4.6 L4.6 7.2 L8.2 2.6" stroke="#3a689a" stroke-width="1.7" fill="none"/></svg>
<div style="position:absolute;left:693px;top:236.19px;line-height:14px;font-size:11px;font-weight:normal;color:#101010;white-space:nowrap;">Использовать</div>
<div style="position:absolute;left:828px;top:233px;width:16px;height:18px;background:linear-gradient(#fdfae8,#f8efc6);border:1px solid #eadfb0;box-sizing:border-box"></div>
<svg style="position:absolute;left:832px;top:241px" width="8" height="4.5"><path d="M0 0 H8 L4.0 4.5 Z" fill="#5a4208"/></svg>
<svg style="position:absolute;left:459px;top:254px" width="13" height="15"><rect x="0.5" y="0.5" width="12" height="13" fill="#f6f8fb" stroke="#7d94ac"/><path d="M5 2.5 H10 M5 4.5 H10 M2 7.5 H10 M2 9.5 H10 M2 11.5 H10" stroke="#a4b4c6" stroke-width="1"/></svg>
<div style="position:absolute;left:480px;top:255.19px;line-height:14px;font-size:11px;font-weight:normal;color:#101010;white-space:nowrap;">СчетНаОплатуПоставщика</div>
<svg style="position:absolute;left:675px;top:256px" width="13" height="13"><defs><radialGradient id="gd675256" cx="0.4" cy="0.35" r="0.7"><stop offset="0" stop-color="#f8e088"/><stop offset="1" stop-color="#c8901c"/></radialGradient></defs><rect x="0.5" y="0.5" width="9" height="9" fill="#f6f9fc" stroke="#88acd0"/><path d="M2.2 4.6 L4.6 7.2 L8.2 2.6" stroke="#3a689a" stroke-width="1.7" fill="none"/><circle cx="9.6" cy="9.6" r="2.4" fill="url(#gd675256)"/></svg>
<div style="position:absolute;left:692px;top:255.19px;line-height:14px;font-size:11px;font-weight:normal;color:#101010;white-space:nowrap;">Автоматически</div>
<svg style="position:absolute;left:459px;top:273px" width="13" height="15"><rect x="0.5" y="0.5" width="12" height="13" fill="#f6f8fb" stroke="#7d94ac"/><path d="M5 2.5 H10 M5 4.5 H10 M2 7.5 H10 M2 9.5 H10 M2 11.5 H10" stroke="#a4b4c6" stroke-width="1"/></svg>
<div style="position:absolute;left:480px;top:274.19px;line-height:14px;font-size:11px;font-weight:normal;color:#101010;white-space:nowrap;">СчетФактураВыданный</div>
<svg style="position:absolute;left:675px;top:275px" width="13" height="13"><defs><radialGradient id="gd675275" cx="0.4" cy="0.35" r="0.7"><stop offset="0" stop-color="#f8e088"/><stop offset="1" stop-color="#c8901c"/></radialGradient></defs><rect x="0.5" y="0.5" width="9" height="9" fill="#f6f9fc" stroke="#88acd0"/><path d="M2.2 4.6 L4.6 7.2 L8.2 2.6" stroke="#3a689a" stroke-width="1.7" fill="none"/><circle cx="9.6" cy="9.6" r="2.4" fill="url(#gd675275)"/></svg>
<div style="position:absolute;left:692px;top:274.19px;line-height:14px;font-size:11px;font-weight:normal;color:#101010;white-space:nowrap;">Автоматически</div>
<svg style="position:absolute;left:459px;top:292px" width="13" height="15"><rect x="0.5" y="0.5" width="12" height="13" fill="#f6f8fb" stroke="#7d94ac"/><path d="M5 2.5 H10 M5 4.5 H10 M2 7.5 H10 M2 9.5 H10 M2 11.5 H10" stroke="#a4b4c6" stroke-width="1"/></svg>
<div style="position:absolute;left:480px;top:293.19px;line-height:14px;font-size:11px;font-weight:normal;color:#101010;white-space:nowrap;">СчетФактураПолученный</div>
<svg style="position:absolute;left:675px;top:294px" width="13" height="13"><defs><radialGradient id="gd675294" cx="0.4" cy="0.35" r="0.7"><stop offset="0" stop-color="#f8e088"/><stop offset="1" stop-color="#c8901c"/></radialGradient></defs><rect x="0.5" y="0.5" width="9" height="9" fill="#f6f9fc" stroke="#88acd0"/><path d="M2.2 4.6 L4.6 7.2 L8.2 2.6" stroke="#3a689a" stroke-width="1.7" fill="none"/><circle cx="9.6" cy="9.6" r="2.4" fill="url(#gd675294)"/></svg>
<div style="position:absolute;left:692px;top:293.19px;line-height:14px;font-size:11px;font-weight:normal;color:#101010;white-space:nowrap;">Автоматически</div>
<svg style="position:absolute;left:459px;top:311px" width="13" height="15"><rect x="0.5" y="0.5" width="12" height="13" fill="#f6f8fb" stroke="#7d94ac"/><path d="M5 2.5 H10 M5 4.5 H10 M2 7.5 H10 M2 9.5 H10 M2 11.5 H10" stroke="#a4b4c6" stroke-width="1"/></svg>
<div style="position:absolute;left:480px;top:312.19px;line-height:14px;font-size:11px;font-weight:normal;color:#101010;white-space:nowrap;">ТаможеннаяДекларацияЭкспорт</div>
<svg style="position:absolute;left:675px;top:313px" width="13" height="13"><defs><radialGradient id="gd675313" cx="0.4" cy="0.35" r="0.7"><stop offset="0" stop-color="#f8e088"/><stop offset="1" stop-color="#c8901c"/></radialGradient></defs><rect x="0.5" y="0.5" width="9" height="9" fill="#f6f9fc" stroke="#88acd0"/><path d="M2.2 4.6 L4.6 7.2 L8.2 2.6" stroke="#3a689a" stroke-width="1.7" fill="none"/><circle cx="9.6" cy="9.6" r="2.4" fill="url(#gd675313)"/></svg>
<div style="position:absolute;left:692px;top:312.19px;line-height:14px;font-size:11px;font-weight:normal;color:#101010;white-space:nowrap;">Автоматически</div>
<div style="position:absolute;left:475px;top:251px;width:143px;height:3px;background:#000"></div>
<div style="position:absolute;left:691px;top:251px;width:163px;height:60px;background:#fff;border:3px solid #000;box-sizing:border-box"></div>
<div style="position:absolute;left:694px;top:272px;width:157px;height:19px;background:#6b98cf"></div>
<div style="position:absolute;left:697px;top:256.19px;line-height:14px;font-size:11px;font-weight:normal;color:#101010;white-space:nowrap;">Автоматически</div>
<div style="position:absolute;left:697px;top:275.19px;line-height:14px;font-size:11px;font-weight:normal;color:#fff;white-space:nowrap;">Использовать</div>
<div style="position:absolute;left:697px;top:294.19px;line-height:14px;font-size:11px;font-weight:normal;color:#101010;white-space:nowrap;">Не использовать</div>
<div style="position:absolute;left:415px;top:350.19px;line-height:14px;font-size:11px;font-weight:normal;color:#2a2418;white-space:nowrap;letter-spacing:0.1px">Не используемые объекты и объекты с условным разделением:</div>
<div style="position:absolute;left:415px;top:374px;width:548px;height:215px;background:#fff;border-left:1px solid #c4b88e;box-sizing:border-box"></div>
<div style="position:absolute;left:415px;top:374px;width:548px;height:22px;background:linear-gradient(#fdfcf4,#efe8cc);border-top:1px solid #c4b88e;border-bottom:1px solid #c8bc94;border-left:1px solid #c4b88e;box-sizing:border-box"></div>
<div style="position:absolute;left:673px;top:375px;width:1px;height:20px;background:#cfc4a0"></div>
<div style="position:absolute;left:853px;top:375px;width:1px;height:20px;background:#cfc4a0"></div>
<div style="position:absolute;left:420px;top:378.19px;line-height:14px;font-size:11px;font-weight:normal;color:#4a3818;white-space:nowrap;">Объекты</div>
<div style="position:absolute;left:678px;top:378.19px;line-height:14px;font-size:11px;font-weight:normal;color:#4a3818;white-space:nowrap;">Использование</div>
<div style="position:absolute;left:858px;top:378.19px;line-height:14px;font-size:11px;font-weight:normal;color:#4a3818;white-space:nowrap;">Условное разделение</div>
<div style="position:absolute;left:405px;top:588px;width:558px;height:1px;background:#d8d8dc"></div>
<div style="position:absolute;left:405px;top:589px;width:558px;height:1px;background:#fafaf6"></div>
<div style="position:absolute;left:405px;top:590px;width:558px;height:25px;background:#f3f0dc"></div>
<div style="position:absolute;left:404px;top:613px;width:491px;height:3px;background:#f7f5ea;border:1px solid #d6d1ba;border-radius:2px;box-sizing:border-box"></div>
<div style="position:absolute;left:900px;top:613px;width:29px;height:3px;background:#f7f5ea;border:1px solid #d6d1ba;border-radius:2px;box-sizing:border-box"></div>
<div style="position:absolute;left:934px;top:613px;width:40px;height:3px;background:#f7f5ea;border:1px solid #d6d1ba;border-radius:2px;box-sizing:border-box"></div>
</body></html>
